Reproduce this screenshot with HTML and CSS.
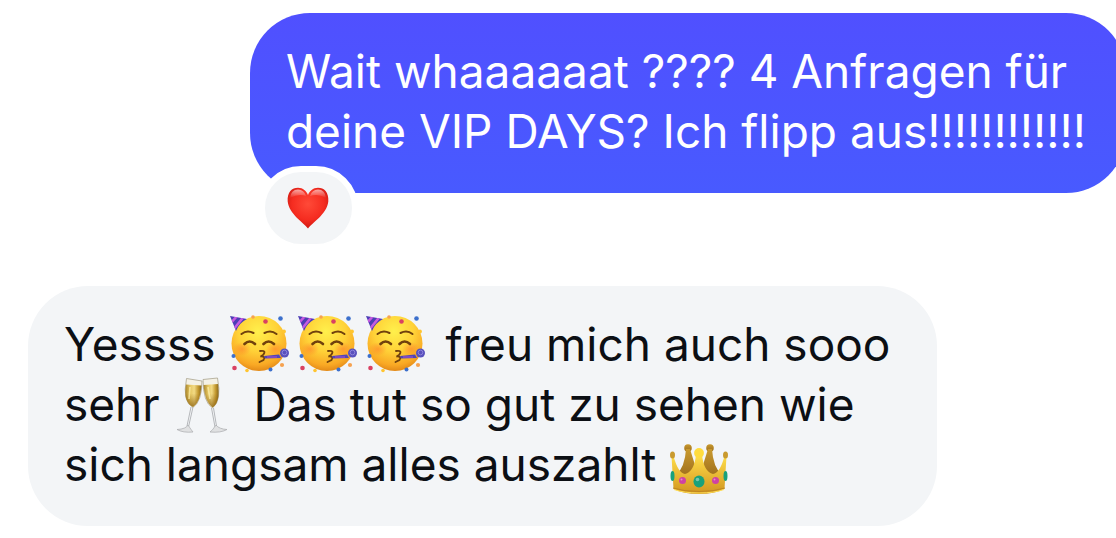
FILE: index.html
```html
<!DOCTYPE html>
<html lang="de">
<head>
<meta charset="utf-8">
<meta name="viewport" content="width=device-width, initial-scale=1">
<title>Chat</title>
<link rel="stylesheet" href="styles.css">
</head>
<body>
<svg class="defs" aria-hidden="true">
  <defs>
    <radialGradient id="face" cx=".48" cy=".28" r=".72">
      <stop offset="0" stop-color="#fff04c"/><stop offset=".5" stop-color="#ffd238"/><stop offset=".85" stop-color="#f9a824"/><stop offset="1" stop-color="#e38a18"/>
    </radialGradient>
    <radialGradient id="blush"><stop offset="0" stop-color="#ff7a2a" stop-opacity=".55"/><stop offset="1" stop-color="#ff7a2a" stop-opacity="0"/></radialGradient>
    <radialGradient id="heart" cx=".5" cy=".4" r=".65">
      <stop offset="0" stop-color="#ff4a38"/><stop offset=".6" stop-color="#f52c20"/><stop offset="1" stop-color="#c5140e"/>
    </radialGradient>
    <linearGradient id="shine" x2="0" y2="1"><stop offset="0" stop-color="#fff" stop-opacity=".6"/><stop offset="1" stop-color="#fff" stop-opacity="0"/></linearGradient>
    <linearGradient id="wine" x2="1" y2="0">
      <stop offset="0" stop-color="#a8842a"/><stop offset=".3" stop-color="#e6c762"/><stop offset=".55" stop-color="#f2da84"/><stop offset=".8" stop-color="#c49a30"/><stop offset="1" stop-color="#8a681c"/>
    </linearGradient>
    <linearGradient id="depth" x2="0" y2="1"><stop offset=".4" stop-color="#8a5c08" stop-opacity="0"/><stop offset="1" stop-color="#7d5206" stop-opacity=".7"/></linearGradient>
    <linearGradient id="gold" x2="0" y2="1"><stop offset="0" stop-color="#ffe04a"/><stop offset=".5" stop-color="#e9b935"/><stop offset="1" stop-color="#d1961f"/></linearGradient>
    <linearGradient id="bronze" x2="0" y2="1"><stop offset="0" stop-color="#c99a2e"/><stop offset="1" stop-color="#9c6c1c"/></linearGradient>
    <clipPath id="hat"><path d="M1 1 18 4Q10 8 7 16Z"/></clipPath>
    <symbol id="party" viewBox="0 0 60 60">
      <circle cx="30" cy="28.500" r="27.500" fill="url(#face)"/>
      <ellipse cx="13" cy="34" rx="9" ry="7" fill="url(#blush)"/><ellipse cx="46" cy="34" rx="9" ry="7" fill="url(#blush)"/>
      <g clip-path="url(#hat)"><path d="M0 0H20V18H0Z" fill="#4d3db5"/><path d="M1 9 9 0M4 15 16 0M10 18 22 2" stroke="#c65be0" stroke-width="2.500"/></g>
      <g fill="none" stroke="#70410d" stroke-linecap="round">
        <path d="M12.500 19Q18 14.500 24.500 18M35.500 18Q42 14.500 47.500 19" stroke-width="2"/>
        <path d="M15.500 29Q20.500 24 26 29M34.500 29Q39.500 24 45 29" stroke-width="2.600"/>
        <path d="M31 36Q38 35 34 40L31.500 41.500Q37 41 34.500 45L30.500 47" stroke-width="1.800"/>
      </g>
      <path d="M35 41 50 39.500 52 43 36 43.500Z" fill="#5146b8"/><path d="M38 42H48" stroke="#a04cca" stroke-width="1.200"/>
      <circle cx="55.500" cy="38" r="4.500" fill="#5951bd"/><circle cx="55.500" cy="37.500" r="2.300" fill="none" stroke="#8d83dc"/>
      <g fill="#d94163"><circle cx="36.500" cy="6.500" r="2.300"/><circle cx="5.500" cy="53" r="2.300"/></g>
      <g fill="#3c70cc"><circle cx="51.500" cy="3.500" r="2.300"/><circle cx="4.500" cy="41" r="2"/><circle cx="41.500" cy="54.500" r="2"/></g>
      <g fill="#ffc52f"><circle cx="18" cy="55.500" r="1.800"/><circle cx="55" cy="16.500" r="1.900"/></g>
      <g fill="#f6a250"><circle cx="53" cy="50" r="2.100"/><circle cx="24" cy="2" r="1.800"/></g>
    </symbol>
  </defs>
</svg>

<main class="chat">
  <article class="message message-sent">
    <p class="text">Wait whaaaaaat ???? 4 Anfragen für<br>deine VIP DAYS? Ich flipp aus!!!!!!!!!!!!</p>
    <button class="reaction" type="button" aria-label="Herz">
      <svg class="heart" viewBox="0 0 42 42" aria-hidden="true">
        <path d="M21 41.500C17 36 2 27 .7 14.500 0 5 5 .7 11 .7c5 0 8.500 3.300 10 7.300C22.500 4 26 .7 31 .7c6 0 11 4.300 10.300 13.800C40 27 25 36 21 41.500Z" fill="url(#heart)"/>
        <path d="M3 11Q4 2.500 11 2.500 17 2.500 19 9 12 6 3 11ZM23 9Q25 2.500 31 2.500 38 2.500 39 11 31 6 23 9Z" fill="url(#shine)"/>
      </svg>
    </button>
  </article>

  <article class="message message-received">
    <p class="text">Yessss <svg class="emoji" role="img" aria-label="Partygesicht"><use href="#party"/></svg><svg class="emoji" role="img" aria-label="Partygesicht"><use href="#party"/></svg><svg class="emoji" role="img" aria-label="Partygesicht"><use href="#party"/></svg> freu mich auch sooo<br>sehr <svg class="emoji" role="img" aria-label="Sektgläser" viewBox="0 0 60 60">
      <g>
        <path d="M13.500 3.500 29 6Q29 26 20 32.500 9 27 13.500 3.500Z" fill="#f4f1e5" stroke="#aaa38e" stroke-width=".8"/>
        <path d="M13 9.500 28.500 10.500Q27.500 27 20 32 10 27 13 9.500Z" fill="url(#wine)"/>
        <path d="M13 9.500 28.500 10.500Q27.500 27 20 32 10 27 13 9.500Z" fill="url(#depth)"/>
        <path d="M17 12 16 24" stroke="#fff1ad" stroke-width="1.600" opacity=".7"/>
        <path d="M18 32 14 51M20 32 15.500 52" stroke="#aeb0b3" stroke-width=".9"/>
        <path d="M15 50Q13 54 4 54.500 10 58 20 57 19 56 15 50Z" fill="#e0e1e2" stroke="#a9abad" stroke-width=".7"/>
      </g>
      <g>
        <path d="M30 4.500 44.500 3Q49 26 39.500 33 30 27 30 4.500Z" fill="#f4f1e5" stroke="#aaa38e" stroke-width=".8"/>
        <path d="M30.500 10 45 9Q47.500 27 39.500 32.500 31.500 26 30.500 10Z" fill="url(#wine)"/>
        <path d="M30.500 10 45 9Q47.500 27 39.500 32.500 31.500 26 30.500 10Z" fill="url(#depth)"/>
        <path d="M35 12 37 24" stroke="#fff1ad" stroke-width="1.600" opacity=".7"/>
        <path d="M38.500 33 42 52M40.500 33 43.500 51" stroke="#aeb0b3" stroke-width=".9"/>
        <path d="M43 50Q46 54 54 54.500 48 58 37 57 39 56 43 50Z" fill="#e0e1e2" stroke="#a9abad" stroke-width=".7"/>
      </g>
    </svg> Das tut so gut zu sehen wie<br>sich langsam alles auszahlt <svg class="emoji" role="img" aria-label="Krone" viewBox="0 0 60 60">
      <g fill="url(#bronze)"><circle cx="19" cy="13" r="3.800"/><circle cx="41" cy="13" r="3.800"/><path d="M17 14H21L26 30V43L7 40Q16 32 17 14ZM39 14H43Q44 32 53 40L34 43V30Z"/></g>
      <path d="M2.500 21H4.500Q9 38 16 39 25 37 27 20H33Q35 37 44 39 51 38 55.500 21H57.500L55.500 54Q46 59 30 59T4.500 54Z" fill="url(#gold)"/>
      <circle cx="30" cy="18" r="4.900" fill="#ffdc3e"/>
      <g fill="#c99a2e"><ellipse cx="3.500" cy="20" rx="2.500" ry="3.500"/><ellipse cx="56.500" cy="20" rx="2.500" ry="3.500"/></g>
      <path d="M4 53Q15 56.500 30 56.500T56 53" fill="none" stroke="#b98022" stroke-width=".8"/>
      <path d="M5 54.500Q15 58 30 58T55 54.500" fill="none" stroke="#ffe05b" stroke-width="1"/>
      <g fill="#19a17b"><ellipse cx="30" cy="46.500" rx="5.500" ry="6"/><ellipse cx="3.500" cy="41" rx="2" ry="5"/><ellipse cx="56.500" cy="41" rx="2" ry="5"/></g>
      <circle cx="13.500" cy="45.500" r="3.500" fill="#cf42a4"/><circle cx="46.500" cy="45.500" r="3.500" fill="#cf42a4"/>
      <g fill="#fff" opacity=".4"><circle cx="28.500" cy="44.500" r="1.800"/><circle cx="12.500" cy="44.500" r="1"/><circle cx="45.500" cy="44.500" r="1"/></g>
    </svg></p>
  </article>
</main>
</body>
</html>
```
FILE: styles.css
```css
* {
  box-sizing: border-box;
}

body {
  margin: 0;
  background: #fff;
  overflow: hidden;
  font-family: Inter, "Liberation Sans", sans-serif;
}

.defs {
  position: absolute;
  width: 0;
  height: 0;
}

.chat {
  display: flex;
  flex-direction: column;
  gap: 93px;
  padding: 13px 0 12px 28px;
}

.message {
  position: relative;
  padding: 28px 40px 32px 36px;
  border-radius: 60px;
}

.message-sent {
  align-self: flex-end;
  margin-right: -10px;
  background: linear-gradient(#5050ff, #485aff);
  color: #fff;
}

.message-received {
  align-self: flex-start;
  padding-right: 47px;
  background: #f3f5f7;
  color: #0c0f14;
}

.text {
  margin: 0;
  font-size: 46px;
  line-height: 60px;
  white-space: nowrap;
}

.emoji {
  width: 60px;
  height: 60px;
  margin: -12px 8px -14px 0;
  vertical-align: baseline;
}

.reaction {
  position: absolute;
  left: 9px;
  bottom: -57px;
  display: grid;
  place-items: center;
  width: 99px;
  height: 84px;
  padding: 0;
  border: 6px solid #fff;
  border-radius: 42px;
  background: #f3f5f7;
}

.heart {
  width: 42px;
  height: 42px;
}
```
